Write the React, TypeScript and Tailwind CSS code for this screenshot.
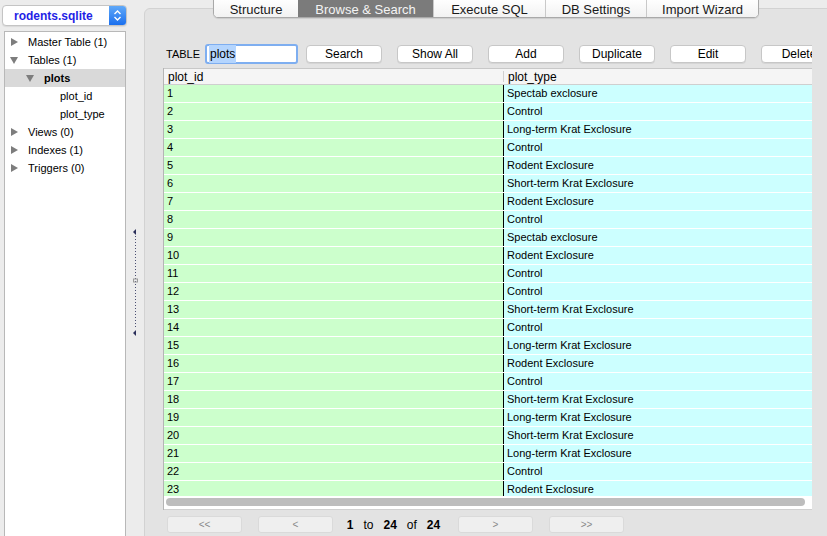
import React from 'react';

const rows: [number, string][] = [
  [1, 'Spectab exclosure'],
  [2, 'Control'],
  [3, 'Long-term Krat Exclosure'],
  [4, 'Control'],
  [5, 'Rodent Exclosure'],
  [6, 'Short-term Krat Exclosure'],
  [7, 'Rodent Exclosure'],
  [8, 'Control'],
  [9, 'Spectab exclosure'],
  [10, 'Rodent Exclosure'],
  [11, 'Control'],
  [12, 'Control'],
  [13, 'Short-term Krat Exclosure'],
  [14, 'Control'],
  [15, 'Long-term Krat Exclosure'],
  [16, 'Rodent Exclosure'],
  [17, 'Control'],
  [18, 'Short-term Krat Exclosure'],
  [19, 'Long-term Krat Exclosure'],
  [20, 'Short-term Krat Exclosure'],
  [21, 'Long-term Krat Exclosure'],
  [22, 'Control'],
  [23, 'Rodent Exclosure'],
  [24, 'Rodent Exclosure'],
];

const tabs = ['Structure', 'Browse & Search', 'Execute SQL', 'DB Settings', 'Import Wizard'];
const tabWidths = ['w-[84px]', 'w-[135px]', 'w-[112px]', 'w-[101px]', 'w-[112px]'];

const actions = ['Search', 'Show All', 'Add', 'Duplicate', 'Edit', 'Delete'];

function Tri({ open }: { open?: boolean }) {
  return (
    <svg width="8" height="8" viewBox="0 0 8 8" className="shrink-0">
      {open ? <path d="M0 1 L8 1 L4 8 Z" fill="#7d7d7d" /> : <path d="M1 0 L8 4 L1 8 Z" fill="#7d7d7d" />}
    </svg>
  );
}

function TreeRow({ label, open, leaf, indent, bold, selected }: { label: string; open?: boolean; leaf?: boolean; indent: string; bold?: boolean; selected?: boolean }) {
  return (
    <div className={`flex items-center h-[18px] ${indent} ${selected ? 'bg-[#d9d9d9]' : ''}`}>
      {!leaf && <Tri open={open} />}
      <span className={`${leaf ? '' : 'ml-[10px]'} ${bold ? 'font-bold' : ''}`}>{label}</span>
    </div>
  );
}

export default function App() {
  return (
    <div className="w-[827px] h-[536px] flex overflow-hidden bg-[#ececec] text-[11px] text-black font-['Liberation_Sans',Arial,sans-serif]">
      {/* LEFT: db selector + tree */}
      <div className="w-[126px] shrink-0 flex flex-col">
        <div className="mt-[5px] ml-[2px] w-[125px] h-[21px] flex rounded-[4px] border border-[#c4c4c4] bg-white shadow-[0_1px_1px_rgba(0,0,0,0.08)] overflow-hidden">
          <span className="flex-1 pl-[11px] flex items-center font-bold text-[#1f1fe6] text-[12px]">rodents.sqlite</span>
          <span className="w-[17px] flex items-center justify-center bg-gradient-to-b from-[#5fa8f8] to-[#1a6fee]">
            <svg width="9" height="13" viewBox="0 0 9 13">
              <path d="M1.5 5 L4.5 2 L7.5 5 M1.5 8 L4.5 11 L7.5 8" stroke="white" strokeWidth="1.4" fill="none" />
            </svg>
          </span>
        </div>
        <div className="mt-[5px] ml-[4px] flex-1 bg-white border border-[#b8b8b8] border-b-0 pt-[1px] text-[11px]">
          <TreeRow label="Master Table (1)" indent="pl-[5px]" />
          <TreeRow label="Tables (1)" open indent="pl-[5px]" />
          <TreeRow label="plots" open bold selected indent="pl-[21px]" />
          <TreeRow label="plot_id" leaf indent="pl-[55px]" />
          <TreeRow label="plot_type" leaf indent="pl-[55px]" />
          <TreeRow label="Views (0)" indent="pl-[5px]" />
          <TreeRow label="Indexes (1)" indent="pl-[5px]" />
          <TreeRow label="Triggers (0)" indent="pl-[5px]" />
        </div>
      </div>

      {/* SPLITTER */}
      <div className="w-[18px] shrink-0 flex flex-col items-center pt-[228px]">
        <svg width="6" height="108" viewBox="0 0 6 108">
          <path d="M1 4 L4 1 L4 7 Z" fill="#2b2f5a" />
          <line x1="3.5" y1="8" x2="3.5" y2="100" stroke="#4a4e72" strokeWidth="1" strokeDasharray="1 2" />
          <rect x="1.5" y="51" width="4" height="3" fill="none" stroke="#9a9a9a" strokeWidth="1" />
          <path d="M1 105 L4 102 L4 108 Z" fill="#2b2f5a" />
        </svg>
      </div>

      {/* RIGHT: tab view */}
      <div className="relative flex-1 min-w-0">
        <div className="absolute top-[-2px] left-[69px] z-10 flex h-[20px] rounded-b-[5px] border border-[#a9a9a9] bg-white overflow-hidden text-[13px] leading-none shadow-[0_1px_1px_rgba(0,0,0,0.1)]">
          {tabs.map((t, i) => (
            <div
              key={t}
              className={`${tabWidths[i]} flex items-center justify-center pt-[2px] ${i === 1 ? 'bg-[#7b7b7b] text-[#f4f4f4]' : 'bg-gradient-to-b from-white to-[#f2f2f2] text-[#1a1a1a]'} ${i > 1 ? 'border-l border-[#c9c9c9]' : ''}`}
            >
              {t}
            </div>
          ))}
        </div>

        <div className="mt-[8px] h-[540px] w-[700px] rounded-[6px] border border-[#d2d2d2] bg-[#e3e3e3] pl-[18px] pt-[35px]">
          <div className="w-[649px] overflow-hidden">
            {/* toolbar */}
            <div className="flex items-center h-[20px] gap-[15px]">
              <div className="flex items-center">
                <span className="pl-[3px] w-[42px]">TABLE</span>
                <div className="w-[93px] h-[20px] rounded-[3px] border-2 border-[#7eaef0] bg-white flex items-center pl-[2px] text-[12px]">
                  <span className="bg-[#b4d5fe] px-[1px]">plots</span>
                </div>
              </div>
              {actions.map((a, i) => (
                <button
                  key={a}
                  className={`w-[76px] h-[18px] shrink-0 rounded-[4px] border border-[#c7c7c7] bg-white text-[12px] leading-none shadow-[0_1px_0_rgba(0,0,0,0.06)] ${i === 0 ? '-ml-[7px]' : ''}`}
                >
                  {a}
                </button>
              ))}
            </div>

            {/* table */}
            <div className="mt-[4px] h-[442px] border-l border-[#b5b5b5] bg-white flex flex-col">
              <div className="flex h-[17px] shrink-0 bg-[#f5f5f5] border-b border-[#cfcfcf] border-t border-t-[#c8c8c8] text-[12px]">
                <div className="w-[339px] pl-[4px] flex items-center">plot_id</div>
                <div className="flex-1 flex items-center border-l border-[#d0d0d0] pl-[4px] my-[2px]">plot_type</div>
              </div>
              <div className="h-[411px] overflow-hidden">
                {rows.map(([id, type]) => (
                  <div key={id} className="flex h-[18px] border-b border-white">
                    <div className="w-[339px] bg-[#ccffcc] pl-[3px] flex items-center">{id}</div>
                    <div className="flex-1 bg-[#ccffff] border-l border-black pl-[3px] flex items-center">{type}</div>
                  </div>
                ))}
              </div>
              <div className="flex-1 flex items-start pt-[2px] pl-[2px] pr-[7px] border-b border-[#d0d0d0]">
                <div className="h-[8px] flex-1 rounded-full bg-[#bdbdbd]" />
              </div>
            </div>

            {/* pagination */}
            <div className="mt-[6px] flex items-center h-[17px] pl-[4px] text-[12px]">
              <button className="w-[75px] h-[17px] rounded-[3px] border border-[#dadada] bg-[#efefef] text-[#8a8a8a] text-[10px]">&lt;&lt;</button>
              <button className="ml-[16px] w-[75px] h-[17px] rounded-[3px] border border-[#dadada] bg-[#efefef] text-[#8a8a8a] text-[10px]">&lt;</button>
              <div className="w-[125px] flex items-center justify-center gap-[10px] pr-[4px]">
                <span className="font-bold">1</span>
                <span>to</span>
                <span className="font-bold">24</span>
                <span>of</span>
                <span className="font-bold">24</span>
              </div>
              <button className="w-[75px] h-[17px] rounded-[3px] border border-[#dadada] bg-[#efefef] text-[#8a8a8a] text-[10px]">&gt;</button>
              <button className="ml-[16px] w-[75px] h-[17px] rounded-[3px] border border-[#dadada] bg-[#efefef] text-[#8a8a8a] text-[10px]">&gt;&gt;</button>
            </div>
          </div>
        </div>
      </div>
    </div>
  );
}
